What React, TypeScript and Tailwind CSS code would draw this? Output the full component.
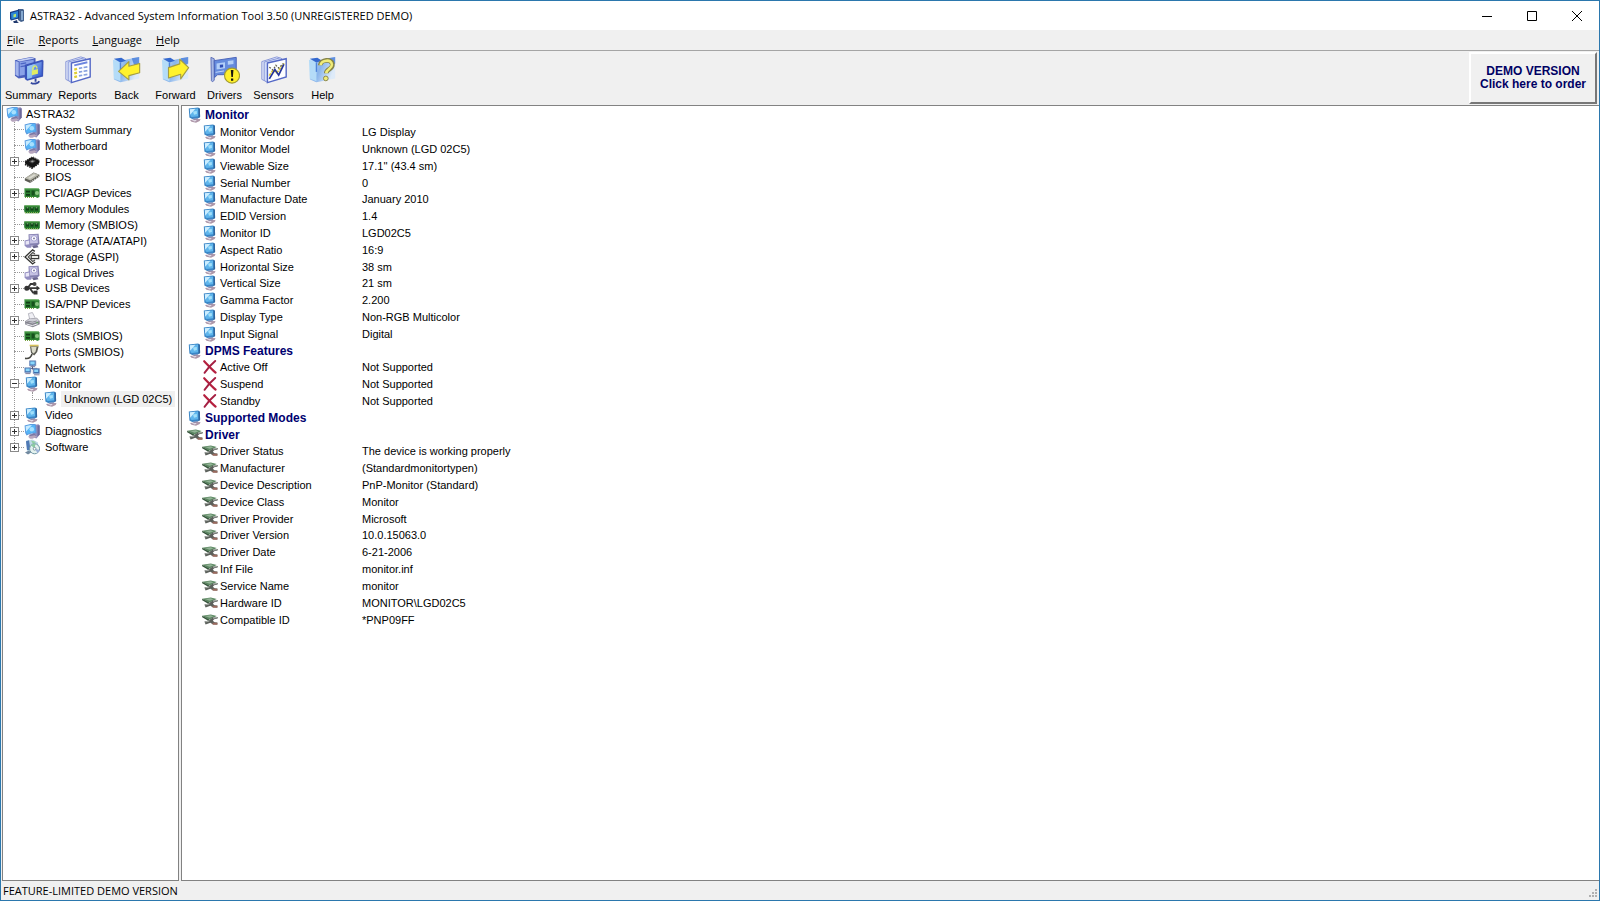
import { useState, type ReactNode } from "react";

type IconName =
  | "pc" | "monitor" | "chip" | "bios" | "card" | "ram" | "disk" | "scsi"
  | "usb" | "printer" | "port" | "network" | "software" | "cross" | "driver";

const glyphs: Record<IconName, ReactNode> = {
  pc: (
    <>
      <path d="M10 2 14.5 1.200l1.300 1.300v9L12.500 15.500 8 14z" fill="#918dbb" />
      <path d="m13.500 2.600 2-.2v9.100l-2 2.300z" fill="#6d6a9a" />
      <path d="M.6 2.600C4 1 8 .6 11.800 1.200l.8 9.200C9 10.200 5.500 11 2.600 12.400L1.200 10z" fill="#5b9ade" />
      <path d="M1.600 3.300c3-1.300 6-1.600 9.200-1.300l.6 7.400c-2.800 0-5.600.6-8.200 1.700l-1-1.500z" fill="#56b4f6" />
      <path d="M1.600 3.300C3.500 2.500 5.600 2 8 1.900L2.100 8.500z" fill="#c8ebff" />
      <circle cx="7.800" cy="6.200" r="2.300" fill="#a6e0ff" />
      <path d="m5.500 11.500 5-.9 1.500 2.400-4.500 1.400-2.500-1z" fill="#7c78a4" />
      <path d="m4 13.400 6.500-1.200 2.500 1.500-4.500 2.100H6z" fill="#b7a6be" />
    </>
  ),
  monitor: (
    <>
      <path d="M1.800 1.400 11.200.5l1.700 1.200.2 8.300-1.900 1.200-6 .7-2.800-1.300z" fill="#3b86c6" />
      <path d="m2.800 2.200 8.200-.8.300 7.900-6.500.8-1.300-.8z" fill="#5fb5ec" />
      <path d="m2.800 2.200 5.600-.5L3.200 7.800z" fill="#cdeeff" />
      <path d="m6 4.400 3.800-.5.1 3.200L7 7.700z" fill="#a2e0fa" />
      <path d="m11.500 1.100 1.400.7.200 8.200-1.500 1z" fill="#2f669f" />
      <path d="m6 11.800 4.500-.6 1.500 1.400-5 .8z" fill="#6d7fb0" />
      <path d="m3 13 6-.8 4.500-.2-.8 1.900L9 15.700l-4.500-.9z" fill="#ad96a8" />
      <path d="m4.600 13.500 5.200-.6-1.800 1.500z" fill="#eceaf5" />
    </>
  ),
  chip: (
    <>
      <path d="M1 7.500 8 3l7.500 3.800v1.800L8.400 14 1 9.500z" fill="#151515" />
      <path d="m4.800 7.500 3.600-2.200 3.400 1.800-3.600 2.300z" fill="#4b4b4b" />
      <path d="m6.800 7.400 1.700-1 1.500.8-1.700 1z" fill="#a5a5a5" />
      <path d="m1 10.400 7 3.700 7.300-5" stroke="#111" strokeWidth="1.600" strokeDasharray="1.600 .8" fill="none" />
      <path d="m.8 7.400 7-4.400M9 3l6.600 3.400" stroke="#222" strokeWidth="1" strokeDasharray="1.600 .8" fill="none" />
    </>
  ),
  bios: (
    <>
      <path d="M.8 9.400 9.600 3.600l5.800 2.200v2L6.200 14 .8 11.400z" fill="#5c5c54" />
      <path d="M1 9.200 9.600 3.800l5.600 2-8.800 5.700z" fill="#b9b9ad" />
      <path d="m4 9 6-3.700 2 .7-6 3.700z" fill="#dcdcd2" />
      <path d="m6.500 12.900 8.500-5.500" stroke="#f3f3ed" strokeDasharray="1 1.200" />
    </>
  ),
  card: (
    <>
      <path d="M.5 3.500H12l3.500.5v8L13 13l-1-1H.5z" fill="#2f8434" />
      <path d="M.5 3.800H15" stroke="#6cb365" />
      <path d="M2 5.800h4v1.700H2zM2 9h4v1.700H2z" fill="#123d16" />
      <path d="M7.600 5.500h3v5h-3z" fill="#17511d" />
      <circle cx="13" cy="8" r="2" fill="#8cc783" />
      <path d="M1 12.500h10" stroke="#78a342" strokeDasharray="1 1" />
    </>
  ),
  ram: (
    <>
      <path d="M.2 4.500h15.600v6l-.8 1.800H1L.2 10z" fill="#22772a" />
      <path d="M.5 4.900h15" stroke="#5ca653" />
      <path d="M2 6.200h3v3.400H2zM6.500 6.200h3v3.400h-3zM11 6.200h3v3.400h-3z" fill="#114118" />
      <path d="M2.700 6.800h1.600M7.200 6.800h1.600m2.900 0h1.600" stroke="#a8d79d" strokeWidth=".8" />
      <path d="M1 11.800h14" stroke="#b2cb6b" strokeDasharray="1 1" />
    </>
  ),
  disk: (
    <>
      <path d="M4.500 1.200 14.600.8l.9 10-3 2.500-7.500-1z" fill="#8581b0" />
      <path d="m5.400 2 8-.3.5 8.200-7.800.7z" fill="#c6c2e4" />
      <circle cx="10" cy="5.400" r="2.800" fill="#fbfbff" stroke="#a29fd0" />
      <circle cx="10" cy="5.400" r=".9" fill="#6e6b96" />
      <path d="m.6 7.500 5.400-1.200v5.500l2 1-1 2H3l-2.400-2z" fill="#928dc0" />
      <path d="m1.600 8.300 3.600-.8v3.700l-3.600.6z" fill="#e8e6f6" />
      <path d="m8 13 5.500-.5 1 1.700-5 1z" fill="#6c688f" />
    </>
  ),
  scsi: (
    <>
      <path d="M10.800 2.400 8.600.9 1 8l7.600 7 2.600-2" fill="none" stroke="#30302e" strokeWidth="1.300" />
      <path d="M11 5 8.700 3.500 4.200 8l4.500 4.400L11 11" fill="none" stroke="#50504d" strokeWidth="1.200" />
      <path d="M7.200 6.400h7.500v3.200H7.200z" fill="#ecece7" stroke="#3b3b39" strokeWidth="1.200" />
    </>
  ),
  usb: (
    <>
      <path d="M1 8.200h13M3.700 8l3-4h3.400M6 8.400l3 4.200h3" fill="none" stroke="#373737" strokeWidth="1.800" />
      <circle cx="2.800" cy="8.200" r="2.500" fill="#333" />
      <path d="m12.500 5.500 3.500 2.700-3.500 2.600z" fill="#333" />
      <circle cx="10.500" cy="4" r="2" fill="#444" />
      <path d="M9.600 10.700h3.900v3.800H9.600z" fill="#333" />
    </>
  ),
  printer: (
    <>
      <path d="m4.400 1.600 4-1.100 3 6-5.600 1.300z" fill="#f0f0f5" stroke="#a9a9b4" strokeWidth=".8" />
      <path d="m1 9.300 3.800-2.600 8-1 2.900 3.200v3.300L8.800 15.300l-7.600-2.700z" fill="#85858f" />
      <path d="m1.400 9.300 3.800-2.200 7.400-.8 2.500 2.800-6.600 2.300z" fill="#d0d0d8" />
      <path d="m3.200 9.200 5.600.9 4-1.200" fill="none" stroke="#777782" strokeWidth=".8" />
      <path d="m2.400 12 6 1.600 5.600-2" fill="none" stroke="#ededf2" />
      <circle cx="13.200" cy="10.700" r=".8" fill="#58ab58" />
    </>
  ),
  port: (
    <>
      <path d="M1 14.400c4 .6 6-.5 7-4.400" fill="none" stroke="#464640" strokeWidth="1.600" />
      <path d="M6 2.200h8.600L13.200 8l-3 3.400L7 9z" fill="#5c5c54" />
      <path d="m7.200 3 5.400.1-1 4.300-1.900 2.100-1.600-1.200z" fill="#dadaca" />
      <path d="M5.600 1.500h9" stroke="#d6c15c" strokeWidth="1.600" />
    </>
  ),
  network: (
    <>
      <path d="M8.500 5v4.500M4 11V8.400h9V11" stroke="#505778" fill="none" />
      <path d="M5.500.8h6.300v5H5.500zM.8 7.800h6v4.800h-6zM9.200 8.600h6.200v5H9.200z" fill="#3c6fae" stroke="#7f95c0" strokeWidth=".7" />
      <path d="M6.300 1.600h4.400v2.800H6.300zM1.700 8.600h4v2.600h-4zm8.500.8h4v2.600h-4z" fill="#8ad6fb" />
      <path d="M1.400 13.600h5M10 14.800h5.500M6.600 6.600H11" stroke="#827e9c" />
    </>
  ),
  software: (
    <>
      <path d="m2 1.800 6.500-1.300L14 3.400l1 7-4 4.200L3 12z" fill="#bfd9e7" />
      <path d="m2 2.200 3-1L6.600 11 3 11z" fill="#4f79b4" />
      <path d="M7 1.500 12 3 9 5z" fill="#8fd0a0" />
      <circle cx="10.600" cy="9.800" r="5" fill="#e4f2ef" stroke="#6f97a4" />
      <path d="M10.600 9.800 7 6.200a5 5 0 0 1 4.400-1.400z" fill="#8ccba2" />
      <path d="m10.600 9.800 5 1.200a5 5 0 0 1-2 3z" fill="#9bb1da" />
      <circle cx="10.600" cy="9.800" r="1.400" fill="#fff" stroke="#6d8995" strokeWidth=".8" />
      <path d="m1 13.600 3.800-2.200 2.400 2.200-3.200 1.900z" fill="#71899f" />
    </>
  ),
  cross: (
    <>
      <path d="M2.200 2.200C5 5 9 9.600 13.600 13.600" stroke="#b5203f" strokeWidth="2.200" fill="none" strokeLinecap="round" />
      <path d="M13.200 2C9 5.600 5.400 9.600 2.600 13.800" stroke="#a51f42" strokeWidth="2" fill="none" strokeLinecap="round" />
    </>
  ),
  driver: (
    <>
      <path d="M.2 3.800 8.800 2.400l6 1.600L7 7.800z" fill="#5c8862" />
      <path d="M.2 3.800v1.400l6.400 3.800.6-1.400z" fill="#34533a" />
      <path d="m3 4 5.600-.7 3 .9-4 1.600z" fill="#93b396" />
      <path d="m2.400 9.600 4.200-1 4-3 5.200-.6-.2 1.600-3.400.6-1.400 1.600 1.800 1.500 2.800.3v1.800l-4.800-.2-2.200-1.400-4.800 1.600z" fill="#5b605b" />
      <path d="m3.400 9.900 4-.9M11 6.200l3.800-.6" stroke="#c3c6c2" strokeWidth=".8" />
      <path d="M10.400 10.700h5v2h-4.600z" fill="#9b6a5e" />
    </>
  ),
};

function Icon({ name }: { name: IconName }) {
  return (
    <svg viewBox="0 0 16 16" className="size-4 shrink-0" aria-hidden="true">
      {glyphs[name]}
    </svg>
  );
}

function Gradients() {
  return (
    <svg className="absolute size-0" aria-hidden="true">
      <defs>
        <linearGradient id="sky" x1="0" x2="1" y1="0" y2="0.4">
          <stop offset="0" stopColor="#cfe8fb" />
          <stop offset=".5" stopColor="#76aaea" />
          <stop offset="1" stopColor="#dbeafa" />
        </linearGradient>
        <linearGradient id="deep" x1="0" x2="1" y1="0" y2="1">
          <stop offset="0" stopColor="#9fc4f6" />
          <stop offset="1" stopColor="#2f57cf" />
        </linearGradient>
      </defs>
    </svg>
  );
}

const backdrop = (
  <>
    <path d="M2 4 9 6l20-4v23l-20 4-7-3z" fill="url(#sky)" opacity=".85" />
    <path d="m1 5 8 3v20l-7-3z" fill="#b4dcf8" />
    <path d="m2 4 7 4 6-2-5-3z" fill="#3469cf" />
    <path d="M21 3.500 29 2v7l-5 3z" fill="#3f77d8" opacity=".75" />
    <path d="M9 8v10" stroke="#4f84da" strokeWidth="1.500" />
  </>
);

const pages = (
  <>
    <path d="M3 7 19 2l3 1v20L7 28l-4-2z" fill="#e3e9fa" stroke="#8594d6" />
    <path d="m5.500 7.500 17-4.500 2 1v20L8.500 29l-3-2z" fill="#d3ddf8" stroke="#8594d6" />
    <path d="M9 8.500 29 4v19.500L9 29.500z" fill="#fdfeff" stroke="#5468c6" strokeWidth="1.500" />
  </>
);

const toolIcons: Record<string, ReactNode> = {
  Summary: (
    <>
      <path d="M1 5.500 18 2l5 1.500V22L5 25l-4-3z" fill="#4a5fbc" />
      <path d="M6 7.500 21 5v14.500L6 22z" fill="#8aa2e8" />
      <path d="m1.500 6.500 3.500 1v15.500l-3.500-2z" fill="#a2b4ec" />
      <path d="m3 5.700 15-3 4 1-16 3.300z" fill="#c2cff4" />
      <path d="m7 9.500 6-1.200M7 12.500l5-1" stroke="#4c65c4" strokeWidth="1.300" />
      <path d="M11.500 10.500 30 5l1.500 1-.5 17-17 4.500-2.500-2z" fill="#3a54ba" />
      <path d="M14 12 29.500 7.300v14.200L14 25.500z" fill="url(#deep)" />
      <path d="m14 12 8-2.300-3 14.500-5 1.300z" fill="#9bd0f6" opacity=".75" />
      <path d="M20 16c0-5 4.500-6 4.500-1.500" stroke="#d9ec6e" strokeWidth="1.500" fill="none" />
      <path d="m19 16.500 6.500-1.500v5L19 21.500z" fill="#e1ed63" />
      <path d="M23 25v3.500m-5 1c3 2 7.500 1 9-1.500" stroke="#34479f" strokeWidth="2" fill="none" />
    </>
  ),
  Reports: (
    <>
      {pages}
      <path d="m12 11 14-3.300" stroke="#6d86e0" strokeWidth="2" />
      <path d="m12 15.500 3-.7m-3 4.700 3-.7m-3 4.700 3-.7" stroke="#dfcf35" strokeWidth="2.500" />
      <path d="m17 14.300 3.500-.7m1.500-.3 4-.7m-9 5.700 3.500-.7m1.500-.3 4-.7m-9 5.700 3.500-.7m1.500-.3 4-.7" stroke="#86a0df" strokeWidth="1.800" />
    </>
  ),
  Back: (
    <>
      {backdrop}
      <path d="m7 17.500 11-10.500v5L29.500 9v10L18 22v4.500z" fill="#fff22e" stroke="#a49d45" strokeWidth="1.200" strokeLinejoin="round" />
    </>
  ),
  Forward: (
    <>
      {backdrop}
      <path d="M8 13.500 20 9.500V4.500l9.500 9-8.500 12v-5L8 24.500z" fill="#fff22e" stroke="#a49d45" strokeWidth="1.200" strokeLinejoin="round" />
    </>
  ),
  Drivers: (
    <>
      <path d="M1 2.500 4.500 4v23l-2 1.500-1-1z" fill="#a7b9e6" stroke="#5b6cb5" />
      <path d="M4.500 6 28 2.500V17l-14 4H8l-3 3z" fill="#658bdd" stroke="#4861b8" />
      <path d="m7 9 9-1.300v6.500L7 15.500zM19 6.500l6-1v4l-6 1z" fill="#b3cff8" />
      <path d="m10.500 10.500 3.500-.5v3l-3.500.5z" fill="#2f4db4" />
      <path d="m6 18.500 9-1.500" stroke="#c7dbfb" />
      <circle cx="23.500" cy="22" r="8" fill="#fff02b" stroke="#a39c35" strokeWidth="1.200" />
      <path d="M22.200 16h2.800l-.6 7.500h-1.600zM22.400 25h2.400v2.500h-2.400z" fill="#17170f" />
    </>
  ),
  Sensors: (
    <>
      {pages}
      <path d="m11 22 4-6 4 3 8-10" stroke="#e0ce37" strokeWidth="1.800" fill="none" strokeDasharray="3 1" />
      <path d="m11 13 4 3 3-5 3 3 5-5" stroke="#625f48" strokeWidth="1.300" fill="none" strokeDasharray="2 1.500" />
      <path d="m11 25.500 6-10 4 6 5.500-11.500" stroke="#25349a" strokeWidth="1.800" fill="none" />
    </>
  ),
  Help: (
    <>
      {backdrop}
      <path d="M13 11c0-6 13-8 13-.5 0 5-6.500 4.500-6.500 9" stroke="#868347" strokeWidth="5" fill="none" />
      <path d="M13.500 11c0-5.500 12-7.500 12-.5 0 4.500-6 4.500-6 9" stroke="#f0ec78" strokeWidth="2.800" fill="none" />
      <circle cx="19" cy="25" r="2.500" fill="#f0ec78" stroke="#868347" />
    </>
  ),
};

type Node = { label: string; icon: IconName; sign?: "+" | "-"; child?: boolean };

const tree: Node[] = [
  { label: "System Summary", icon: "pc" },
  { label: "Motherboard", icon: "pc" },
  { label: "Processor", icon: "chip", sign: "+" },
  { label: "BIOS", icon: "bios" },
  { label: "PCI/AGP Devices", icon: "card", sign: "+" },
  { label: "Memory Modules", icon: "ram" },
  { label: "Memory (SMBIOS)", icon: "ram" },
  { label: "Storage (ATA/ATAPI)", icon: "disk", sign: "+" },
  { label: "Storage (ASPI)", icon: "scsi", sign: "+" },
  { label: "Logical Drives", icon: "disk" },
  { label: "USB Devices", icon: "usb", sign: "+" },
  { label: "ISA/PNP Devices", icon: "card" },
  { label: "Printers", icon: "printer", sign: "+" },
  { label: "Slots (SMBIOS)", icon: "card" },
  { label: "Ports (SMBIOS)", icon: "port" },
  { label: "Network", icon: "network" },
  { label: "Monitor", icon: "monitor", sign: "-" },
  { label: "Unknown (LGD 02C5)", icon: "monitor", child: true },
  { label: "Video", icon: "monitor", sign: "+" },
  { label: "Diagnostics", icon: "pc", sign: "+" },
  { label: "Software", icon: "software", sign: "+" },
];

type Section = { title: string; icon: IconName; rowIcon: IconName; rows: [string, string][] };

const sections: Section[] = [
  {
    title: "Monitor",
    icon: "monitor",
    rowIcon: "monitor",
    rows: [
      ["Monitor Vendor", "LG Display"],
      ["Monitor Model", "Unknown (LGD 02C5)"],
      ["Viewable Size", "17.1'' (43.4 sm)"],
      ["Serial Number", "0"],
      ["Manufacture Date", "January 2010"],
      ["EDID Version", "1.4"],
      ["Monitor ID", "LGD02C5"],
      ["Aspect Ratio", "16:9"],
      ["Horizontal Size", "38 sm"],
      ["Vertical Size", "21 sm"],
      ["Gamma Factor", "2.200"],
      ["Display Type", "Non-RGB Multicolor"],
      ["Input Signal", "Digital"],
    ],
  },
  {
    title: "DPMS Features",
    icon: "monitor",
    rowIcon: "cross",
    rows: [
      ["Active Off", "Not Supported"],
      ["Suspend", "Not Supported"],
      ["Standby", "Not Supported"],
    ],
  },
  { title: "Supported Modes", icon: "monitor", rowIcon: "monitor", rows: [] },
  {
    title: "Driver",
    icon: "driver",
    rowIcon: "driver",
    rows: [
      ["Driver Status", "The device is working properly"],
      ["Manufacturer", "(Standardmonitortypen)"],
      ["Device Description", "PnP-Monitor (Standard)"],
      ["Device Class", "Monitor"],
      ["Driver Provider", "Microsoft"],
      ["Driver Version", "10.0.15063.0"],
      ["Driver Date", "6-21-2006"],
      ["Inf File", "monitor.inf"],
      ["Service Name", "monitor"],
      ["Hardware ID", "MONITOR\\LGD02C5"],
      ["Compatible ID", "*PNP09FF"],
    ],
  },
];

function TitleBar() {
  return (
    <header className="flex h-[29px] shrink-0 items-center bg-white pl-2">
      <svg viewBox="0 0 16 16" className="size-4" aria-hidden="true">
        <path d="M9 1h5l1 1v11l-3 1-3-2z" fill="#45638f" />
        <path d="M12 3h2v9h-2z" fill="#86a9d0" />
        <path d="M1 4 10 1.500v9L2 12.500 1 11z" fill="#163a83" />
        <path d="m2 5 7-2v6.500l-6.500 2z" fill="#2c84d6" />
        <path d="M4.500 6.500 7 5.800v3l-2.500.7z" fill="#b7e46c" />
        <path d="m4 13.500 4-1.500.5 2L10 15H5z" fill="#20396e" />
      </svg>
      <h1 className="pl-[5px]">ASTRA32 - Advanced System Information Tool 3.50 (UNREGISTERED DEMO)</h1>
      <div className="ml-auto flex self-stretch">
        <button aria-label="Minimize" className="grid w-[45px] place-items-center">
          <svg viewBox="0 0 10 10" className="size-[10px]" stroke="#000"><path d="M0 5.500h10" /></svg>
        </button>
        <button aria-label="Maximize" className="grid w-[45px] place-items-center">
          <svg viewBox="0 0 10 10" className="size-[10px]" stroke="#000" fill="none"><path d="M.5.5h9v9h-9z" /></svg>
        </button>
        <button aria-label="Close" className="grid w-[45px] place-items-center">
          <svg viewBox="0 0 10 10" className="size-[10px]" stroke="#000"><path d="m0 0 10 10M10 0 0 10" /></svg>
        </button>
      </div>
    </header>
  );
}

function Toolbar() {
  return (
    <div className="flex h-[55px] shrink-0 border-t border-[#a5a5a5] py-px pr-[2px] font-['Liberation_Sans',sans-serif]">
      <div className="flex pl-[3px]">
        {Object.entries(toolIcons).map(([label, art]) => (
          <button key={label} className="flex w-[49px] flex-col items-center gap-px pt-[3px]">
            <svg viewBox="0 0 32 32" className="size-[30px]" aria-hidden="true">{art}</svg>
            <span className="pt-px leading-4">{label}</span>
          </button>
        ))}
      </div>
      <button className="ml-auto w-[128px] border-2 border-t-white border-r-[#777] border-b-[#777] border-l-white text-xs leading-[13px] font-bold text-[#000064]">
        DEMO VERSION
        <br />
        Click here to order
      </button>
    </div>
  );
}

function TreeRow({ node, selected, onSelect }: { node: Node; selected: boolean; onSelect: () => void }) {
  return (
    <li className={node.child ? "relative flex items-center pl-7" : "relative flex items-center pl-[6px]"}>
      {node.child ? (
        <span className="h-2 w-[11px] self-start border-b border-l border-dotted border-[#999]" />
      ) : node.sign ? (
        <>
          <button
            aria-label={node.sign === "+" ? `Expand ${node.label}` : `Collapse ${node.label}`}
            className="grid size-[9px] place-items-center border border-[#8a8a8a] bg-white"
          >
            <svg viewBox="0 0 5 5" className="size-[5px]" stroke="#333">
              <path d={node.sign === "+" ? "M0 2.500h5M2.500 0v5" : "M0 2.500h5"} />
            </svg>
          </button>
          <span className="w-[5px] border-t border-dotted border-[#999]" />
        </>
      ) : (
        <span className="ml-1 w-[10px] border-t border-dotted border-[#999]" />
      )}
      <button onClick={onSelect} className="flex items-center">
        <Icon name={node.icon} />
        <span className={selected ? "ml-[2px] bg-[#f0f0f0] px-[3px] leading-4" : "pl-[5px] leading-4"}>{node.label}</span>
      </button>
    </li>
  );
}

function DeviceTree() {
  const [selected, setSelected] = useState("Unknown (LGD 02C5)");
  return (
    <nav className="w-[177px] shrink-0 overflow-hidden border border-[#828282] bg-white pl-px whitespace-nowrap">
      <ul className="relative grid h-[349px] auto-rows-fr before:absolute before:top-4 before:bottom-2 before:left-[10px] before:border-l before:border-dotted before:border-[#999]">
        <li className="flex items-center pl-[2px]">
          <button className="flex items-center" onClick={() => setSelected("ASTRA32")}>
            <Icon name="pc" />
            <span className="pl-1 leading-4">ASTRA32</span>
          </button>
        </li>
        {tree.map((node) => (
          <TreeRow
            key={node.label}
            node={node}
            selected={node.label === selected}
            onSelect={() => setSelected(node.label)}
          />
        ))}
      </ul>
    </nav>
  );
}

function Details() {
  return (
    <main className="min-w-0 flex-1 overflow-hidden border border-r-0 border-[#828282] bg-white pt-px">
      <table className="h-[521px] w-full table-fixed border-collapse text-left leading-4 whitespace-nowrap">
        <colgroup>
          <col className="w-[180px]" />
          <col />
        </colgroup>
        {sections.map((section) => (
          <tbody key={section.title}>
            <tr>
              <th colSpan={2} className="p-0 text-xs leading-4 font-bold text-[#000070]">
                <span className="flex items-center gap-[2px] pl-[5px]">
                  <Icon name={section.icon} />
                  {section.title}
                </span>
              </th>
            </tr>
            {section.rows.map(([name, value]) => (
              <tr key={name}>
                <th className="p-0 font-normal">
                  <span className="flex items-center gap-[2px] pl-[20px]">
                    <Icon name={section.rowIcon} />
                    {name}
                  </span>
                </th>
                <td className="p-0">{value}</td>
              </tr>
            ))}
          </tbody>
        ))}
      </table>
    </main>
  );
}

const menus = ["File", "Reports", "Language", "Help"];

export default function App() {
  return (
    <div className="flex h-screen flex-col border border-[#2b77ad] bg-[#f0f0f0] font-['Open_Sans',sans-serif] text-[11px] leading-4 text-black">
      <Gradients />
      <TitleBar />
      <nav className="flex h-5 shrink-0 items-center gap-[14px] pb-px pl-[6px]">
        {menus.map((menu) => (
          <button key={menu}>
            <u>{menu[0]}</u>
            {menu.slice(1)}
          </button>
        ))}
      </nav>
      <Toolbar />
      <div className="flex min-h-0 flex-1 gap-[2px] pl-px font-['Liberation_Sans',sans-serif]">
        <DeviceTree />
        <Details />
      </div>
      <footer className="flex h-[19px] shrink-0 items-center justify-between pl-[2px]">
        <span>FEATURE-LIMITED DEMO VERSION</span>
        <svg viewBox="0 0 12 12" className="size-3 self-end" fill="#b0b0b0" aria-hidden="true">
          <path d="M8 1h2v2H8zM8 4h2v2H8zM5 4h2v2H5zM8 7h2v2H8zM5 7h2v2H5zM2 7h2v2H2z" />
        </svg>
      </footer>
    </div>
  );
}
